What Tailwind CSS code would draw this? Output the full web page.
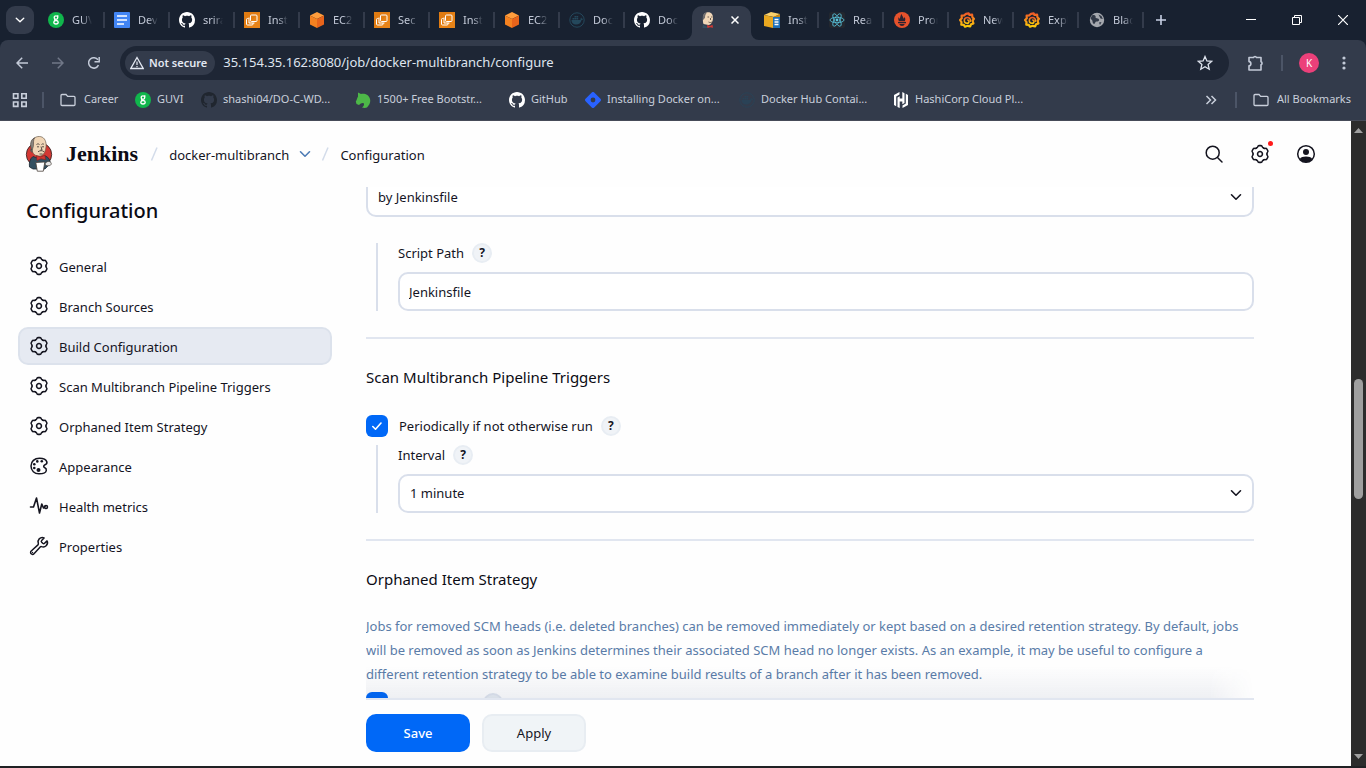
<!DOCTYPE html>
<html lang="en">
<head>
<meta charset="utf-8">
<title>docker-multibranch Config [Jenkins]</title>
<script src="https://cdn.jsdelivr.net/npm/@tailwindcss/browser@4"></script>
</head>
<body class="flex h-screen flex-col overflow-hidden bg-[#202124] font-['Noto_Sans',sans-serif] text-[13px] text-[#14141f]">

<svg class="absolute h-0 w-0" aria-hidden="true">
  <defs><linearGradient id="gf" x1="0" y1="0" x2="0" y2="1"><stop offset="0" stop-color="#f05a28"/><stop offset="1" stop-color="#fbca0a"/></linearGradient></defs>
  <symbol id="github" viewBox="0 0 16 16"><path fill="currentColor" d="M8 0C3.58 0 0 3.58 0 8c0 3.54 2.29 6.53 5.47 7.59.4.07.55-.17.55-.38 0-.19-.01-.82-.01-1.49-2.01.37-2.53-.49-2.69-.94-.09-.23-.48-.94-.82-1.13-.28-.15-.68-.52-.01-.53.63-.01 1.08.58 1.23.82.72 1.21 1.87.87 2.33.66.07-.52.28-.87.51-1.07-1.78-.2-3.64-.89-3.64-3.95 0-.87.31-1.59.82-2.15-.08-.2-.36-1.02.08-2.12 0 0 .67-.21 2.2.82.64-.18 1.32-.27 2-.27s1.36.09 2 .27c1.53-1.04 2.2-.82 2.2-.82.44 1.1.16 1.92.08 2.12.51.56.82 1.27.82 2.15 0 3.07-1.87 3.75-3.65 3.95.29.25.54.73.54 1.48 0 1.07-.01 1.93-.01 2.2 0 .21.15.46.55.38A8.01 8.01 0 0 0 16 8c0-4.42-3.58-8-8-8z"/></symbol>
  <symbol id="guvi" viewBox="0 0 16 16"><circle cx="8" cy="8" r="8" fill="#10b64c"/><g fill="none" stroke="#fff" stroke-width="1.3"><circle cx="8" cy="5.6" r="1.8"/><path d="M10.4 3.6 9.3 4.4M7 7.2c-1 1 .2 1.2 1.2 1.3 1.500.2 2 .8 2 1.700 0 1.200-1 1.800-2.200 1.800s-2.200-.6-2.200-1.700c0-.9.700-1.500 1.600-1.700"/></g></symbol>
  <symbol id="docs" viewBox="0 0 16 16"><rect width="16" height="16" rx="1" fill="#4285f4"/><path d="M3 4h10M3 8h10M3 12h7" stroke="#fff" stroke-width="1.6"/></symbol>
  <symbol id="awsinst" viewBox="0 0 16 16"><rect width="16" height="16" fill="#e07b12"/><path d="M0 16 16 0v16z" fill="#ed8c1c" opacity=".5"/><g fill="none" stroke="#fff" stroke-width="1"><rect x="6.500" y="3" width="6.500" height="6.500" rx="1"/><path d="M5 5.500v5.500h5.500M4.500 6.500H3.500a1 1 0 0 0-1 1V12a1 1 0 0 0 1 1H8a1 1 0 0 0 1-1v-1"/></g></symbol>
  <symbol id="cube" viewBox="0 0 16 16"><path d="M8 0 15 3.500 8 7 1 3.500z" fill="#ff9d3c"/><path d="M1 3.500 8 7v9l-7-3.600z" fill="#f58220"/><path d="M15 3.500 8 7v9l7-3.600z" fill="#e8641b"/></symbol>
  <symbol id="docker" viewBox="0 0 16 16"><circle cx="8" cy="8" r="7.200" fill="none" stroke="currentColor" stroke-width="1"/><path fill="currentColor" d="M2.500 8h8.300c.6 0 .9-.4.8-1-.1-.6.1-1 .5-1.400.4.400.600.800.700 1.200.5-.1 1 0 1.300.3-.3.600-.8.900-1.500.9C11.800 11 10 12.500 7 12.500 4 12.500 2.500 10.800 2.500 8zM3.500 6h1.700v1.500H3.500zM5.500 6h1.700v1.500H5.500zM7.500 6h1.700v1.500H7.500zM5.500 4h1.700v1.600H5.500zM7.500 4h1.700v1.600H7.500z"/></symbol>
  <symbol id="grafana" viewBox="0 0 16 16"><path fill="none" stroke="url(#gf)" stroke-width="2.200" stroke-linejoin="round" d="m7 1.800 2.600-.5.700 1.500 2.800-.2.300 2.600 1.500 1.600-1.300 1.900.8 2.700-2.300.9-.9 2-2.500-.5L6 14.700l-1.200-1.900-2.500-.1.200-2.500L1 8l1.800-1.700-.2-2.600 2.600-.3z"/><path fill="none" stroke="url(#gf)" stroke-width="1.500" stroke-linecap="round" d="M11.500 9.200c.4-2.400-1.300-3.700-3-3.700-2 0-3.200 1.500-3.200 3s1.200 2.700 2.600 2.700c1.300 0 2.100-.9 2.100-1.800 0-.8-.6-1.300-1.300-1.300"/></symbol>
  <symbol id="gear" viewBox="-13 -13 26 26"><g fill="none" stroke="currentColor" stroke-width="1.800" stroke-linecap="round" stroke-linejoin="round"><circle r="2.900"/><path id="lobe" d="M-4.100-7.100C-3.200-7.600-2.800-7.800-2.600-8.700Q-2.300-9.900-1.200-9.900H1.200Q2.300-9.900 2.600-8.700C2.800-7.800 3.200-7.600 4.100-7.100"/><use href="#lobe" transform="rotate(60)"/><use href="#lobe" transform="rotate(120)"/><use href="#lobe" transform="rotate(180)"/><use href="#lobe" transform="rotate(240)"/><use href="#lobe" transform="rotate(300)"/></g></symbol>
  <symbol id="folder" viewBox="0 0 16 16"><path d="M1 3.500c0-.6.400-1 1-1h4l1.700 1.900H14c.6 0 1 .4 1 1V12.500c0 .6-.4 1-1 1H2c-.6 0-1-.4-1-1z" fill="none" stroke="currentColor" stroke-width="1.300"/></symbol>
  <symbol id="chev" viewBox="0 0 12 12"><path d="m1.500 3.800 4.500 4.400 4.500-4.400" fill="none" stroke="currentColor" stroke-width="1.600" stroke-linecap="round" stroke-linejoin="round"/></symbol>
</svg>

<nav aria-label="Tabs" class="flex h-10 shrink-0 items-center bg-[#182130] text-[11px] text-[#c3cad8]">
  <button aria-label="Search tabs" class="ml-1.5 flex h-7 w-7 shrink-0 items-center justify-center rounded-[9px] bg-[#333b4b] text-white"><svg class="h-2.5 w-2.5"><use href="#chev"/></svg></button>
  <div class="ml-1.5 flex">
    <a href="#" class="flex h-4 w-[65px] items-center border-r-2 border-[#333b4b] pl-2"><svg class="h-4 w-4 shrink-0"><use href="#guvi"/></svg><span class="ml-2 w-5 overflow-hidden whitespace-nowrap mask-r-from-50%">GUVI</span></a>
    <a href="#" class="flex h-4 w-[65px] items-center border-r-2 border-[#333b4b] pl-[9px]"><svg class="h-4 w-4 shrink-0"><use href="#docs"/></svg><span class="ml-2 w-5 overflow-hidden whitespace-nowrap mask-r-from-50%">DevOps</span></a>
    <a href="#" class="flex h-4 w-[65px] items-center border-r-2 border-[#333b4b] pl-[9px]"><svg class="h-4 w-4 shrink-0 text-white"><use href="#github"/></svg><span class="ml-2 w-5 overflow-hidden whitespace-nowrap mask-r-from-50%">sriram</span></a>
    <a href="#" class="flex h-4 w-[65px] items-center border-r-2 border-[#333b4b] pl-[9px]"><svg class="h-4 w-4 shrink-0"><use href="#awsinst"/></svg><span class="ml-2 w-5 overflow-hidden whitespace-nowrap mask-r-from-50%">Inst</span></a>
    <a href="#" class="flex h-4 w-[65px] items-center border-r-2 border-[#333b4b] pl-[9px]"><svg class="h-4 w-4 shrink-0"><use href="#cube"/></svg><span class="ml-2 w-5 overflow-hidden whitespace-nowrap mask-r-from-50%">EC2</span></a>
    <a href="#" class="flex h-4 w-[65px] items-center border-r-2 border-[#333b4b] pl-[9px]"><svg class="h-4 w-4 shrink-0"><use href="#awsinst"/></svg><span class="ml-2 w-5 overflow-hidden whitespace-nowrap mask-r-from-50%">Sec</span></a>
    <a href="#" class="flex h-4 w-[65px] items-center border-r-2 border-[#333b4b] pl-[9px]"><svg class="h-4 w-4 shrink-0"><use href="#awsinst"/></svg><span class="ml-2 w-5 overflow-hidden whitespace-nowrap mask-r-from-50%">Inst</span></a>
    <a href="#" class="flex h-4 w-[65px] items-center border-r-2 border-[#333b4b] pl-[9px]"><svg class="h-4 w-4 shrink-0"><use href="#cube"/></svg><span class="ml-2 w-5 overflow-hidden whitespace-nowrap mask-r-from-50%">EC2</span></a>
    <a href="#" class="flex h-4 w-[65px] items-center border-r-2 border-[#333b4b] pl-[9px]"><svg class="h-4 w-4 shrink-0 text-[#24485c]"><use href="#docker"/></svg><span class="ml-2 w-5 overflow-hidden whitespace-nowrap mask-r-from-50%">Docker</span></a>
    <a href="#" class="flex h-4 w-[65px] items-center pl-[9px]"><svg class="h-4 w-4 shrink-0 text-white"><use href="#github"/></svg><span class="ml-2 w-5 overflow-hidden whitespace-nowrap mask-r-from-50%">Docker</span></a>
  </div>
  <div class="relative ml-0.5 flex h-[34px] w-[59px] shrink-0 items-center self-end rounded-t-[10px] bg-[#333b4b] pb-1.5">
    <svg class="absolute -left-2 bottom-0 h-2 w-2" viewBox="0 0 8 8"><path d="M8 0v8H0a8 8 0 0 0 8-8z" fill="#333b4b"/></svg>
    <svg class="absolute -right-2 bottom-0 h-2 w-2" viewBox="0 0 8 8"><path d="M0 0v8h8a8 8 0 0 1-8-8z" fill="#333b4b"/></svg>
    <svg class="ml-2 h-4 w-4" viewBox="0 0 16 16"><path d="M3.500 12c-1-2-.5-5-.5-6.500C3 2 5.500.3 8.300.3 11.500.3 13.300 3 13 6.500c-.2 3-1.500 6-4.500 6.500z" fill="#f0d6b7"/><path d="M3.200 8C2 4.500 3.500.8 7.200.3c-1.500 1.500-2.200 3-2.200 5.500z" fill="#6d6b6d"/><path d="M3 12c1 2 3 2.500 5 2.500V16H2.500z" fill="#335061"/><path d="m7 13 3 1 2.500-1.200.5 3-3-.6L7.500 16z" fill="#d33833"/><path d="M7.500 5h1.600m2 0h1.400M8.500 10c1.500.8 2.500.6 3.800-.2M10.500 6v2" stroke="#49403a" stroke-width=".8" fill="none"/></svg>
    <button aria-label="Close tab" class="ml-3.5 flex h-2.5 w-2.5 items-center justify-center"><svg class="h-2 w-2" viewBox="0 0 8 8"><path d="m.5.5 7 7m0-7-7 7" stroke="#fff" stroke-width="1.500"/></svg></button>
  </div>
  <div class="ml-[3px] flex">
    <a href="#" class="flex h-4 w-[65px] items-center border-r-2 border-[#333b4b] pl-[10px]"><svg class="h-4 w-4 shrink-0" viewBox="0 0 16 16"><path d="M0 3 7 0l9 2-6 3z" fill="#f9d06b"/><path d="m0 3 9 2v11l-9-2z" fill="#e9a820"/><path d="m9 5 7-3v12l-7 2z" fill="#c68610"/><path d="M9 5h7v11H9z" fill="#1d6fb8"/><path d="M10.500 7.500h4M10.500 10h4M10.500 12.500h4" stroke="#fff" stroke-width="1.300"/></svg><span class="ml-2 w-5 overflow-hidden whitespace-nowrap mask-r-from-50%">Inst</span></a>
    <a href="#" class="flex h-4 w-[65px] items-center border-r-2 border-[#333b4b] pl-[10px]"><svg class="h-4 w-4 shrink-0" viewBox="0 0 16 16"><rect width="16" height="16" rx="2" fill="#23272f"/><g fill="none" stroke="#58c4dc" stroke-width=".8"><ellipse cx="8" cy="8" rx="7" ry="2.700"/><ellipse cx="8" cy="8" rx="7" ry="2.700" transform="rotate(60 8 8)"/><ellipse cx="8" cy="8" rx="7" ry="2.700" transform="rotate(120 8 8)"/></g><circle cx="8" cy="8" r="1.400" fill="#58c4dc"/></svg><span class="ml-2 w-5 overflow-hidden whitespace-nowrap mask-r-from-50%">React</span></a>
    <a href="#" class="flex h-4 w-[65px] items-center border-r-2 border-[#333b4b] pl-[10px]"><svg class="h-4 w-4 shrink-0" viewBox="0 0 16 16"><circle cx="8" cy="8" r="8" fill="#e6522c"/><path d="M3.600 9.300C4.600 9.500 5 9 4.500 8c-.4-.9-.2-2.300.4-3 0 1 .4 1.600.9 1.700C6.500 4.600 6.600 3 7.700 1.800c-.1 1.400.9 2 1.300 3.200.3.800.4 1.400.5 1.800.5-.4.8-.9.7-1.700.9.9 1.500 2 .9 3.100-.3.600 0 1 .9 1zM4 10.100h8v1.200H4zM5.300 12h5.400c-.3 1.200-1.400 2-2.700 2s-2.400-.8-2.700-2z" fill="#2b2330"/></svg><span class="ml-2 w-5 overflow-hidden whitespace-nowrap mask-r-from-50%">Prom</span></a>
    <a href="#" class="flex h-4 w-[65px] items-center border-r-2 border-[#333b4b] pl-[10px]"><svg class="h-4 w-4 shrink-0"><use href="#grafana"/></svg><span class="ml-2 w-5 overflow-hidden whitespace-nowrap mask-r-from-50%">New</span></a>
    <a href="#" class="flex h-4 w-[65px] items-center border-r-2 border-[#333b4b] pl-[10px]"><svg class="h-4 w-4 shrink-0"><use href="#grafana"/></svg><span class="ml-2 w-5 overflow-hidden whitespace-nowrap mask-r-from-50%">Expl</span></a>
    <a href="#" class="flex h-4 w-[65px] items-center border-r-2 border-[#333b4b] pl-[10px]"><svg class="h-4 w-4 shrink-0" viewBox="0 0 16 16"><circle cx="8" cy="8" r="7.200" fill="#a4a7ad"/><path d="M3 3.500c1.500-.8 3-.5 3.500.5s-.5 1.500.5 2 2.500 0 3 1.500-1 2-2.500 2-1 2-2.500 2.500C3 11 4 9 3 8s-1.500-1-1-2.500zM9.500 2.500l3 1.500 1.300 3-2.300-.5zM10 10.500l2.500-.5-1.500 3z" fill="#303846"/></svg><span class="ml-2 w-5 overflow-hidden whitespace-nowrap mask-r-from-50%">Black</span></a>
  </div>
  <button aria-label="New tab" class="ml-2.5 p-0.5"><svg class="h-2.5 w-2.5" viewBox="0 0 10 10"><path d="M5 0v10M0 5h10" stroke="#c7d0e4" stroke-width="1.600"/></svg></button>
  <div class="ml-auto flex items-center gap-9 pr-[18px]">
    <button aria-label="Minimize"><svg class="h-2.5 w-2.5" viewBox="0 0 10 10"><path d="M0 4.500h10" stroke="#fff"/></svg></button>
    <button aria-label="Restore"><svg class="h-2.5 w-2.5" viewBox="0 0 10 10"><path d="M.5 2.500h7v7h-7zM2.500 2.500v-2h7v7h-2" fill="none" stroke="#fff"/></svg></button>
    <button aria-label="Close"><svg class="h-2.5 w-2.5" viewBox="0 0 10 10"><path d="m0 0 10 10M10 0 0 10" stroke="#fff" stroke-width="1.200"/></svg></button>
  </div>
</nav>

<div class="shrink-0 bg-[#182130]"><div class="flex h-[46px] items-center rounded-t-lg bg-[#333b4b] text-[#c3cad8]">
  <button aria-label="Back" class="ml-4"><svg class="h-3 w-3" viewBox="0 0 12 12"><path d="M12 6H1M6.200.8 1 6l5.200 5.200" fill="none" stroke="currentColor" stroke-width="1.500"/></svg></button>
  <button aria-label="Forward" class="ml-6 text-[#717888]"><svg class="h-3 w-3" viewBox="0 0 12 12"><path d="M0 6h11M5.800.8 11 6l-5.200 5.200" fill="none" stroke="currentColor" stroke-width="1.500"/></svg></button>
  <button aria-label="Reload" class="ml-6"><svg class="h-3 w-3" viewBox="0 0 12 12"><path d="M10.500 8.200A5.200 5.200 0 1 1 10 2.800" fill="none" stroke="currentColor" stroke-width="1.500"/><path d="M11.200 0v4.800H6.500" fill="none" stroke="currentColor" stroke-width="1.500"/></svg></button>
  <div class="ml-5 flex h-[34px] flex-1 items-center rounded-full bg-[#1e2635] pl-[5px] pr-4">
    <button class="flex h-6 items-center gap-[5px] rounded-full bg-[#333b4b] pl-[5px] pr-2 text-[11px] font-semibold text-[#e3e8f2]"><svg class="h-3.5 w-3.5" viewBox="0 0 14 14"><path d="M7 1.500 13.200 12.500H.8z" fill="none" stroke="currentColor" stroke-width="1.300"/><path d="M7 5.500v3.400M7 9.900v1.300" stroke="currentColor" stroke-width="1.200"/></svg>Not secure</button>
    <input aria-label="Address" class="ml-2 min-w-0 flex-1 bg-transparent text-[13px] text-[#dfe4ee] outline-none" value="35.154.35.162:8080/job/docker-multibranch/configure">
    <button aria-label="Bookmark this page"><svg class="h-4 w-4" viewBox="0 0 16 16"><path d="m8 1.500 1.900 4.400 4.800.4-3.600 3.200 1.100 4.700L8 11.700l-4.200 2.500 1.100-4.700-3.600-3.200 4.800-.4z" fill="none" stroke="#dfe4ee" stroke-width="1.300"/></svg></button>
  </div>
  <button aria-label="Extensions" class="ml-[18px]"><svg class="h-[18px] w-[18px]" viewBox="0 0 18 18"><path d="M2 3.500h4.500a1.600 1.600 0 0 1 3 0H14v4.300a1.600 1.600 0 0 1 0 3V16H2v-4.200c2.500-.2 2.500-4 0-4.200z" fill="none" stroke="currentColor" stroke-width="1.600" stroke-linejoin="round"/></svg></button>
  <span class="ml-4 h-4 w-0.5 bg-[#4c5567]"></span>
  <button aria-label="Profile" class="ml-4 h-5 w-5 rounded-full bg-[#ec407a] text-center text-[10px] leading-5 text-white">K</button>
  <button aria-label="Menu" class="ml-[21px] mr-[18px]"><svg class="h-4 w-2" viewBox="0 0 8 16"><g fill="currentColor"><circle cx="4" cy="3" r="1.600"/><circle cx="4" cy="8" r="1.600"/><circle cx="4" cy="13" r="1.600"/></g></svg></button>
</div></div>

<nav aria-label="Bookmarks" class="flex h-[35px] shrink-0 items-center border-b border-[#464b58] bg-[#333b4b] pb-[7px] text-[11px] text-[#c9cfdb]">
  <button aria-label="Tab groups" class="ml-3 w-4"><svg class="h-4 w-4" viewBox="0 0 16 16"><path d="M1.500 1.800h4.400v4.400H1.500zM9.800 1.800h4.400v4.400H9.800zM1.500 10h4.400v4.400H1.500zM9.800 10h4.400v4.400H9.800z" fill="none" stroke="currentColor" stroke-width="1.600"/></svg></button>
  <span class="ml-3.5 h-4 w-0.5 bg-[#4c5567]"></span>
  <a href="#" class="ml-4 flex w-[75px] items-center gap-2 whitespace-nowrap"><svg class="h-4 w-4 shrink-0"><use href="#folder"/></svg>Career</a>
  <a href="#" class="flex w-[66px] items-center gap-1.5 whitespace-nowrap"><svg class="h-4 w-4 shrink-0"><use href="#guvi"/></svg>GUVI</a>
  <a href="#" class="flex w-[154px] items-center gap-1.5 whitespace-nowrap"><svg class="h-4 w-4 shrink-0 text-[#20262f]"><use href="#github"/></svg>shashi04/DO-C-WD...</a>
  <a href="#" class="flex w-[154px] items-center gap-1.5 whitespace-nowrap"><svg class="h-4 w-4 shrink-0" viewBox="0 0 16 16"><path d="M3 .5 6 2c4-.8 8 1 9 5 .8 3-.4 6-3 8.500-1.500.6-3.500.5-5 0 2-1.500 2.500-3 1.500-4.500-2-.3-3 .5-4.500 2L1.500 12 .8 9.500C2 8 2 6 3 4.500z" fill="#4db848"/></svg>1500+ Free Bootstr...</a>
  <a href="#" class="flex w-[76px] items-center gap-1.5 whitespace-nowrap"><svg class="h-4 w-4 shrink-0 text-white"><use href="#github"/></svg>GitHub</a>
  <a href="#" class="flex w-[154px] items-center gap-1.5 whitespace-nowrap"><svg class="h-4 w-4 shrink-0" viewBox="0 0 16 16"><path d="m6.500.8a2 2 0 0 1 3 0l5.700 5.700a2 2 0 0 1 0 3l-5.700 5.700a2 2 0 0 1-3 0L.8 9.500a2 2 0 0 1 0-3z" fill="#2962ff"/><circle cx="8" cy="8" r="2.400" fill="#333b4b"/></svg>Installing Docker on...</a>
  <a href="#" class="flex w-[154px] items-center gap-1.5 whitespace-nowrap"><svg class="h-4 w-4 shrink-0 text-[#2a4256]"><use href="#docker"/></svg>Docker Hub Contai...</a>
  <a href="#" class="flex items-center gap-1.5 whitespace-nowrap"><svg class="h-4 w-4 shrink-0" viewBox="0 0 16 16"><path d="M6.500 0 1 3v10l2.200 1.300V4.400L6.500 2.500zM4.500 5.500v9.400l2.200 1.100V9.500h2.600v2.700l2.200-1.300V1.200L9.300 0v6.500H6.700V4.200zM9.500 16l5.500-3V3l-2.200-1.300v9.900l-3.300 1.900z" fill="#fff"/></svg>HashiCorp Cloud Pl...</a>
  <button aria-label="More bookmarks" class="ml-auto"><svg class="h-3 w-3" viewBox="0 0 12 12"><path d="m1.500 2 4 4-4 4m5-8 4 4-4 4" fill="none" stroke="currentColor" stroke-width="1.500"/></svg></button>
  <span class="ml-[18px] h-4 w-0.5 bg-[#4c5567]"></span>
  <a href="#" class="ml-4 mr-[15px] flex items-center gap-2 whitespace-nowrap"><svg class="h-4 w-4 shrink-0"><use href="#folder"/></svg>All Bookmarks</a>
</nav>

<div class="mb-0.5 flex min-h-0 flex-1">
  <div class="flex min-w-0 flex-1 flex-col bg-[#fefefe]">
    <header class="flex h-[66px] shrink-0 items-center pl-6 pr-[34px]">
      <a href="#" class="flex items-center">
        <svg class="h-9 w-[30px]" viewBox="0 0 30 36"><ellipse cx="15" cy="18.500" rx="12.700" ry="12" fill="#d33833" stroke="#2a2020" stroke-width=".8"/><path d="M5.500 31C4.800 27 6 22.500 9 20.500l6 2 6.500-2.500c3.500 1.500 4.500 4 4.800 7.500L21 33H9z" fill="#335061" stroke="#1d2a33" stroke-width=".8"/><path d="M8.500 16C6.800 11 6.500 5.500 9.700 2.600c3.200-3 8.300-2.800 10.700.4 2.300 3.400 2 8.300.8 11.800-1 3.300-3.200 5.400-6 5.400-3.200 0-5.500-1.500-6.700-4.200z" fill="#f0d6b7" stroke="#6d5c4a" stroke-width=".7"/><path d="M8 14.500C5.800 9.500 6 4 10.500 1.800 9 4.500 9.800 7 9.300 10.500zM7.500 13c-1.500-.5-1.500 3 .8 3.300z" fill="#8a8580" stroke="#49403a" stroke-width=".6"/><path d="M12.500 8.500c1-.8 2-.8 3 0m2 0c.8-.8 1.800-.8 2.500 0M13 10.800h2m3 0h2M17 10.500l1 3.500h-1.500M14 15.800c2-1.500 4.500-1.500 6 0M15.500 18h3" stroke="#49403a" stroke-width=".9" fill="none"/><path d="m12.500 19.500 4 1.500 4.500-1.800.5 4.500-4.500-1-4 1.800z" fill="#d33833" stroke="#81201d" stroke-width=".6"/><path d="m11.800 26.500 9-.5-1.500 9.200h-6z" fill="#fff" stroke="#49403a" stroke-width=".8"/><path d="M21 28c1-2.500 4-3.500 6-1.500 1 2-.5 4-5 3z" fill="#e5e5e5" stroke="#49403a" stroke-width=".7"/></svg>
        <span class="ml-3 font-['Liberation_Serif',serif] text-[22px] font-bold leading-8 text-[#0b0b14]">Jenkins</span>
      </a>
      <svg class="ml-3 h-3.5 w-2" viewBox="0 0 8 14"><path d="M7 .5 1.500 13.500" stroke="#d3dcea" stroke-width="1.500"/></svg>
      <a href="#" class="ml-[11px] pt-[3px]">docker-multibranch</a>
      <button aria-label="Open menu" class="ml-2.5 text-[#4d7bb5]"><svg class="h-3 w-3"><use href="#chev"/></svg></button>
      <svg class="ml-2.5 h-3.5 w-2" viewBox="0 0 8 14"><path d="M7 .5 1.500 13.500" stroke="#d3dcea" stroke-width="1.500"/></svg>
      <a href="#" class="ml-[11px] pt-[3px]">Configuration</a>
      <div class="ml-auto flex items-center gap-6">
        <button aria-label="Search"><svg class="h-[22px] w-[22px]" viewBox="0 0 22 22"><g fill="none" stroke="currentColor" stroke-width="1.500" stroke-linecap="round"><circle cx="9.700" cy="9.700" r="6.500"/><path d="m14.500 14.500 4.500 4.500"/></g></svg></button>
        <button aria-label="Manage Jenkins" class="relative"><svg class="h-[22px] w-[22px]"><use href="#gear"/></svg><span class="absolute -right-0.5 -top-0.5 h-[5px] w-[5px] rounded-full bg-[#ff1a1a]"></span></button>
        <button aria-label="User"><svg class="h-[22px] w-[22px]" viewBox="0 0 22 22"><circle cx="11" cy="11" r="8.300" fill="none" stroke="currentColor" stroke-width="1.500"/><circle cx="11" cy="9" r="3" fill="currentColor"/><path d="M4.800 16c1-1.800 3.300-2.500 6.200-2.500s5.200.700 6.200 2.500c-1.500 2-3.800 3.200-6.200 3.200S6.300 18 4.800 16z" fill="currentColor"/></svg></button>
      </div>
    </header>
    <div class="flex min-h-0 flex-1">
      <aside class="w-[350px] shrink-0 pl-[18px] pr-[18px]">
        <h1 class="mb-5 ml-2 mt-2 text-[20px] font-medium leading-8 text-[#0b0b14]">Configuration</h1>
        <nav aria-label="Sections" class="flex flex-col gap-0.5">
          <a href="#" class="flex h-[38px] items-center gap-[9px] rounded-[10px] px-2.5"><svg class="h-[22px] w-[22px]"><use href="#gear"/></svg><span class="pt-[3px]">General</span></a>
          <a href="#" class="flex h-[38px] items-center gap-[9px] rounded-[10px] px-2.5"><svg class="h-[22px] w-[22px]"><use href="#gear"/></svg><span class="pt-[3px]">Branch Sources</span></a>
          <a href="#" aria-current="true" class="flex h-[38px] items-center gap-[9px] rounded-[10px] border-2 border-[#dce2ec] bg-[#e6eaf2] px-2"><svg class="h-[22px] w-[22px]"><use href="#gear"/></svg><span class="pt-[3px]">Build Configuration</span></a>
          <a href="#" class="flex h-[38px] items-center gap-[9px] rounded-[10px] px-2.5"><svg class="h-[22px] w-[22px]"><use href="#gear"/></svg><span class="pt-[3px]">Scan Multibranch Pipeline Triggers</span></a>
          <a href="#" class="flex h-[38px] items-center gap-[9px] rounded-[10px] px-2.5"><svg class="h-[22px] w-[22px]"><use href="#gear"/></svg><span class="pt-[3px]">Orphaned Item Strategy</span></a>
          <a href="#" class="flex h-[38px] items-center gap-[9px] rounded-[10px] px-2.5"><svg class="h-[22px] w-[22px]" viewBox="0 0 22 22"><path d="M16.800 12.700c-1.600-.6-1.500-2.200.2-2.900 1.700-.6 2.300-1.400 1.800-3C18 4.300 14.800 3.200 11.500 3.200 6.500 3.200 3 6.500 3 11c0 4.800 3.500 7.800 8 7.800 3.500 0 7-1 7.300-3.300.2-1.500-.5-2.400-1.500-2.800z" fill="none" stroke="currentColor" stroke-width="1.500"/><g fill="currentColor"><circle cx="6.300" cy="9.300" r="1.300"/><circle cx="9.300" cy="6.400" r="1.300"/><circle cx="13.800" cy="6.300" r="1.300"/><circle cx="6.300" cy="13" r="1.300"/><circle cx="10.500" cy="15" r="2"/></g></svg><span class="pt-[3px]">Appearance</span></a>
          <a href="#" class="flex h-[38px] items-center gap-[9px] rounded-[10px] px-2.5"><svg class="h-[22px] w-[22px]" viewBox="0 0 22 22"><path d="M2.500 12h3L8.500 3l3 15 2.300-9 1.700 4 1.500-1.500" fill="none" stroke="currentColor" stroke-width="1.600" stroke-linecap="round" stroke-linejoin="round"/><circle cx="18" cy="12" r="1.500" fill="none" stroke="currentColor" stroke-width="1.500"/></svg><span class="pt-[3px]">Health metrics</span></a>
          <a href="#" class="flex h-[38px] items-center gap-[9px] rounded-[10px] px-2.5"><svg class="h-[22px] w-[22px]" viewBox="-16 -16 544 544"><path d="M393.870 190a32.100 32.100 0 0 1-45.250 0l-26.570-26.570a32.090 32.090 0 0 1 0-45.260L382.190 58a1 1 0 0 0-.3-1.640c-38.820-16.640-89.150-8.160-121.110 23.570-30.580 30.350-32.320 76-21.120 115.840a31.930 31.930 0 0 1-9.060 32.080L64 380a48.170 48.170 0 1 0 68 68l153.860-167a31.930 31.930 0 0 1 31.600-9.130c39.540 10.590 84.540 8.600 114.720-21.190 32.490-32 39.500-88.560 23.750-120.930a1 1 0 0 0-1.600-.26z" fill="none" stroke="currentColor" stroke-linecap="round" stroke-miterlimit="10" stroke-width="36"/><circle cx="96" cy="416" r="18" fill="currentColor"/></svg><span class="pt-[3px]">Properties</span></a>
        </nav>
      </aside>
      <main class="ml-4 mr-[97px] flex min-w-0 flex-1 flex-col">
        <form class="flex min-h-0 flex-1 flex-col">
          <div class="relative flex min-h-0 flex-1 flex-col overflow-hidden">
            <div class="relative -mt-[9px] shrink-0">
              <select aria-label="Mode" class="h-[39px] w-full appearance-none rounded-[10px] border-2 border-[#d9dfeb] bg-white px-2.5"><option>by Jenkinsfile</option></select>
              <svg class="pointer-events-none absolute right-3 top-[13px] h-3 w-3"><use href="#chev"/></svg>
            </div>
            <div class="ml-2.5 mt-[26px] shrink-0 border-l-2 border-[#d9dfeb] pl-5">
              <div class="flex h-5 items-center gap-2"><label for="script" class="pt-0.5">Script Path</label><button type="button" aria-label="Help for Script Path" class="h-5 w-5 rounded-full border-2 border-[#e8edf3] bg-[#f0f3f7] text-center text-[12px] font-bold leading-4">?</button></div>
              <input id="script" value="Jenkinsfile" class="mt-[9px] block h-[39px] w-full rounded-[10px] border-2 border-[#d9dfeb] bg-white px-[9px]">
            </div>
            <hr class="mt-[26px] shrink-0 border-t-2 border-[#e1e6f0]">
            <h2 class="mt-[26px] shrink-0 text-[15px] leading-6 text-[#0b0b14]">Scan Multibranch Pipeline Triggers</h2>
            <div class="mt-[26px] flex h-[22px] shrink-0 items-center">
              <span class="relative h-[22px] w-[22px]"><input id="periodic" type="checkbox" checked class="block h-[22px] w-[22px] appearance-none rounded-md bg-[#0068f7]"><svg class="pointer-events-none absolute left-1.5 top-1.5 h-2.5 w-2.5" viewBox="0 0 10 10"><path d="m.8 5.500 2.700 2.700L9 2" fill="none" stroke="#fff" stroke-width="1.600" stroke-linecap="round" stroke-linejoin="round"/></svg></span>
              <label for="periodic" class="ml-[11px] mr-2 pt-0.5">Periodically if not otherwise run</label><button type="button" aria-label="Help for Periodically if not otherwise run" class="h-5 w-5 rounded-full border-2 border-[#e8edf3] bg-[#f0f3f7] text-center text-[12px] font-bold leading-4">?</button>
            </div>
            <div class="ml-2.5 mt-2 shrink-0 border-l-2 border-[#d9dfeb] pl-5">
              <div class="flex h-5 items-center gap-2"><label for="interval" class="pt-0.5">Interval</label><button type="button" aria-label="Help for Interval" class="h-5 w-5 rounded-full border-2 border-[#e8edf3] bg-[#f0f3f7] text-center text-[12px] font-bold leading-4">?</button></div>
              <div class="relative mt-[9px]">
                <select id="interval" class="block h-[39px] w-full appearance-none rounded-[10px] border-2 border-[#d9dfeb] bg-white px-2.5"><option>1 minute</option></select>
                <svg class="pointer-events-none absolute right-3 top-[13px] h-3 w-3"><use href="#chev"/></svg>
              </div>
            </div>
            <hr class="mt-[26px] shrink-0 border-t-2 border-[#e1e6f0]">
            <h2 class="mt-[26px] shrink-0 text-[15px] leading-6 text-[#0b0b14]">Orphaned Item Strategy</h2>
            <p class="mt-[23px] shrink-0 leading-6 text-[#5a7ca8]">Jobs for removed SCM heads (i.e. deleted branches) can be removed immediately or kept based on a desired retention strategy. By default, jobs will be removed as soon as Jenkins determines their associated SCM head no longer exists. As an example, it may be useful to configure a different retention strategy to be able to examine build results of a branch after it has been removed.</p>
            <div class="mt-1.5 flex h-[22px] shrink-0 items-center">
              <input aria-label="Discard old items" type="checkbox" checked class="block h-[22px] w-[22px] appearance-none rounded-md bg-[#0068f7]">
              <button type="button" aria-label="Help for Discard old items" class="ml-[95px] h-5 w-5 rounded-full border-2 border-[#dfe5ee] bg-[#e8edf3]"></button>
            </div>
            <div class="pointer-events-none absolute inset-x-0 bottom-0 h-8 bg-linear-to-t from-[#1e3264]/7 to-transparent mask-r-from-95%"></div>
          </div>
          <div class="flex h-[68px] shrink-0 gap-3 border-t-2 border-[#e1e6f0] pt-3.5">
            <button type="button" class="h-[38px] w-[104px] rounded-[10px] bg-[#0068f7] pt-0.5 font-medium text-white">Save</button>
            <button type="button" class="h-[38px] w-[104px] rounded-[10px] border-2 border-[#e8edf2] bg-[#f0f4f7] pt-0.5">Apply</button>
          </div>
        </form>
      </main>
    </div>
  </div>
  <div class="relative flex w-[15px] shrink-0 flex-col items-center justify-between bg-[#2c2c2c] py-[7px]">
    <svg class="h-[5px] w-[9px]" viewBox="0 0 9 5"><path d="M0 5 4.500 0 9 5z" fill="#a0a0a0"/></svg>
    <span class="absolute left-[3px] top-[40%] h-[120px] w-[9px] rounded-full bg-[#9f9f9f]"></span>
    <svg class="h-[5px] w-[9px]" viewBox="0 0 9 5"><path d="M0 0l4.500 5L9 0z" fill="#a0a0a0"/></svg>
  </div>
</div>
</body>
</html>
